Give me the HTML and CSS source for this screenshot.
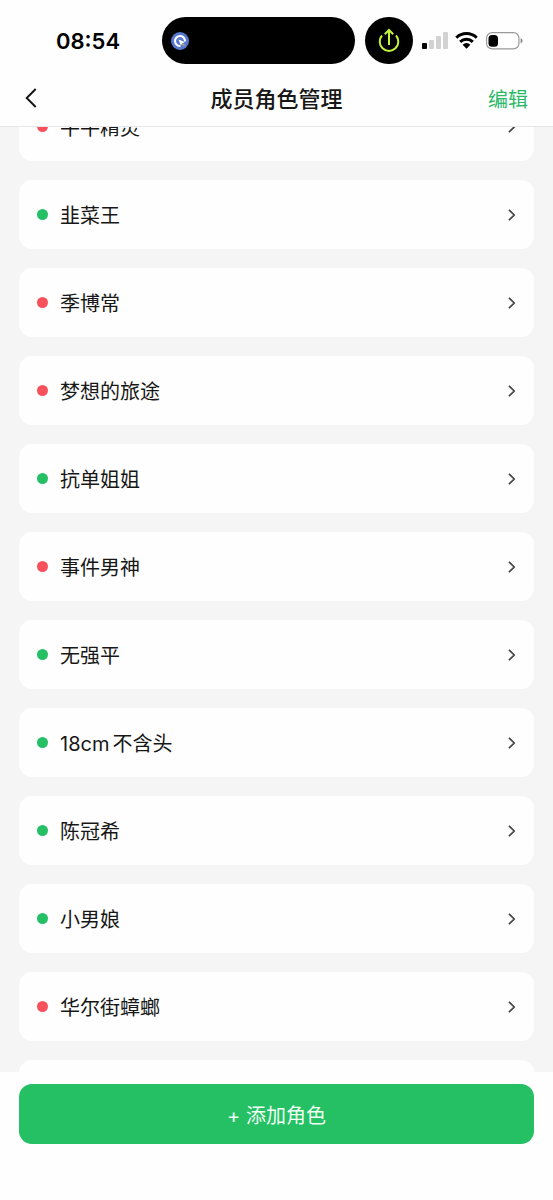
FILE: index.html
```html
<!DOCTYPE html>
<html lang="zh-CN">
<head>
<meta charset="utf-8">
<meta name="viewport" content="width=device-width, initial-scale=1">
<title>成员角色管理</title>
<link rel="stylesheet" href="styles.css">
</head>
<body>
<svg class="sprite" aria-hidden="true">
  <symbol id="chevron" viewBox="0 0 8 14"><path d="M1 1.800L6.200 7L1 12.200" fill="none" stroke="currentColor" stroke-width="1.700"/></symbol>
</svg>
<div class="screen">
  <header class="top">
    <div class="status">
      <time class="clock">08:54</time>
      <div class="island">
        <svg class="island-icon" viewBox="0 0 18 18" aria-hidden="true">
          <circle cx="9" cy="9" r="9" fill="#5878cf"/>
          <path d="M9.500 14A5 5 0 1 1 14 9.500" fill="none" stroke="#fff" stroke-width="2"/>
          <path d="M7.500 7.500L13.800 9.900L11.400 11.300L9.900 13.500Z" fill="#fff"/>
          <path d="M11.400 11.500L13.600 13.800" stroke="#b3a582" stroke-width="1.800"/>
        </svg>
      </div>
      <div class="activity">
        <svg class="activity-icon" viewBox="0 0 24 26" aria-hidden="true">
          <path d="M5 7.500A9.300 9.300 0 1 0 19 7.500M12 17V3M7.800 6.200L12 2L16.200 6.200" fill="none" stroke="#c3f53c" stroke-width="2"/>
        </svg>
      </div>
      <svg class="signal" viewBox="0 0 27 17" aria-hidden="true">
        <rect x="0" y="11" width="5" height="6" rx="1" fill="#000"/>
        <rect x="7" y="8" width="5" height="9" rx="1" fill="#d2d2d2"/>
        <rect x="14" y="4" width="5" height="13" rx="1" fill="#d2d2d2"/>
        <rect x="21" y="0" width="5" height="17" rx="1" fill="#d2d2d2"/>
      </svg>
      <svg class="wifi" viewBox="0 0 23 17" aria-hidden="true">
        <path d="M1.300 5.800A14.500 14.500 0 0 1 21.700 5.800M5.200 9.900A9 9 0 0 1 17.800 9.900" fill="none" stroke="#000" stroke-width="3"/>
        <path d="M7.600 12.700A5.600 5.600 0 0 1 15.400 12.700L11.500 16.800Z" fill="#000"/>
      </svg>
      <svg class="battery" viewBox="0 0 37 18" aria-hidden="true">
        <rect x=".6" y=".6" width="32.300" height="16.300" rx="5.500" fill="#fff" stroke="#999" stroke-width="1.200"/>
        <rect x="2.500" y="3" width="9.500" height="11.800" rx="3.500" fill="#000"/>
        <path d="M34.600 6V11.500Q36.600 10.600 36.600 8.750Q36.600 6.900 34.600 6Z" fill="#888"/>
      </svg>
    </div>
    <nav class="navbar">
      <button class="back" type="button" aria-label="返回">
        <svg class="back-icon" viewBox="0 0 12 20" aria-hidden="true"><path d="M10.700 1L1.700 10L10.700 19" fill="none" stroke="#111" stroke-width="1.900"/></svg>
      </button>
      <h1 class="title">成员角色管理</h1>
      <button class="edit" type="button">编辑</button>
    </nav>
  </header>
  <main class="viewport">
    <ul class="roles">
      <li><a class="role" href="#"><span class="dot off"></span><span class="name">牛牛精灵</span><svg class="chevron"><use href="#chevron"/></svg></a></li>
      <li><a class="role" href="#"><span class="dot"></span><span class="name">韭菜王</span><svg class="chevron"><use href="#chevron"/></svg></a></li>
      <li><a class="role" href="#"><span class="dot off"></span><span class="name">季博常</span><svg class="chevron"><use href="#chevron"/></svg></a></li>
      <li><a class="role" href="#"><span class="dot off"></span><span class="name">梦想的旅途</span><svg class="chevron"><use href="#chevron"/></svg></a></li>
      <li><a class="role" href="#"><span class="dot"></span><span class="name">抗单姐姐</span><svg class="chevron"><use href="#chevron"/></svg></a></li>
      <li><a class="role" href="#"><span class="dot off"></span><span class="name">事件男神</span><svg class="chevron"><use href="#chevron"/></svg></a></li>
      <li><a class="role" href="#"><span class="dot"></span><span class="name">无强平</span><svg class="chevron"><use href="#chevron"/></svg></a></li>
      <li><a class="role" href="#"><span class="dot"></span><span class="name"><span class="latin">18cm</span>不含头</span><svg class="chevron"><use href="#chevron"/></svg></a></li>
      <li><a class="role" href="#"><span class="dot"></span><span class="name">陈冠希</span><svg class="chevron"><use href="#chevron"/></svg></a></li>
      <li><a class="role" href="#"><span class="dot"></span><span class="name">小男娘</span><svg class="chevron"><use href="#chevron"/></svg></a></li>
      <li><a class="role" href="#"><span class="dot off"></span><span class="name">华尔街蟑螂</span><svg class="chevron"><use href="#chevron"/></svg></a></li>
      <li><div class="role"></div></li>
    </ul>
  </main>
  <footer class="bottom">
    <button class="add" type="button">+ 添加角色</button>
  </footer>
</div>
</body>
</html>
```

FILE: styles.css
```css
* {
  box-sizing: border-box;
}

body {
  margin: 0;
  color: #171717;
  background: #fefefe;
  font-family: Inter, "Noto Sans CJK SC", sans-serif;
  font-size: 20px;
  line-height: 28px;
}

button {
  padding: 0;
  border: 0;
  background: none;
  font: inherit;
  cursor: pointer;
}

svg {
  display: block;
  flex: none;
}

.sprite {
  position: absolute;
  width: 0;
  height: 0;
}

.screen {
  display: flex;
  flex-direction: column;
  height: 100vh;
}

.top {
  flex: none;
  background: #fefefe;
  border-bottom: 1px solid #e6e6e6;
}

.status {
  display: flex;
  align-items: center;
  padding: 17px 30px 0 56px;
}

.clock {
  flex: 1;
  color: #000;
  font-size: 22px;
  font-weight: 600;
}

.island {
  display: flex;
  align-items: center;
  width: 193px;
  height: 47px;
  margin-right: 10px;
  padding-left: 9px;
  border-radius: 24px;
  background: #000;
}

.island-icon {
  width: 18px;
  height: 18px;
}

.activity {
  display: grid;
  place-items: center;
  width: 48px;
  height: 47px;
  margin-right: 9px;
  border-radius: 24px;
  background: #000;
}

.activity-icon {
  width: 24px;
  height: 26px;
}

.signal {
  width: 27px;
  height: 17px;
  margin-right: 6px;
}

.wifi {
  width: 23px;
  height: 17px;
  margin-right: 8px;
}

.battery {
  width: 37px;
  height: 18px;
}

.navbar {
  display: grid;
  grid-template-columns: 1fr auto 1fr;
  align-items: center;
  height: 62px;
  padding: 6px 25px 0;
}

.back {
  justify-self: start;
}

.back-icon {
  width: 12px;
  height: 20px;
}

.title {
  margin: 0;
  padding-top: 2px;
  font-size: 22px;
  font-weight: 500;
}

.edit {
  justify-self: end;
  padding-top: 4px;
  color: #2bb968;
}

.viewport {
  flex: 1;
  min-height: 0;
  overflow: hidden;
  background: #f5f5f5;
}

/* The list rests partly scrolled under the header. */
.roles {
  display: flex;
  flex-direction: column;
  gap: 19px;
  margin: -35px 0 0;
  padding: 0 19px;
  list-style: none;
}

.role {
  display: flex;
  align-items: center;
  height: 69px;
  padding: 0 18px;
  border-radius: 13px;
  background: #fefefe;
  color: inherit;
  text-decoration: none;
}

.dot {
  width: 11px;
  height: 11px;
  margin-right: 12px;
  border-radius: 50%;
  background: #25bf66;
}

.dot.off {
  background: #f9515c;
}

.name {
  flex: 1;
  padding-top: 2px;
}

.latin {
  margin-right: 3px;
}

.chevron {
  width: 8px;
  height: 14px;
  color: #444;
}

.bottom {
  flex: none;
  padding: 12px 19px 56px;
  background: #fefefe;
}

.add {
  display: block;
  width: 100%;
  height: 60px;
  padding-top: 3px;
  border-radius: 13px;
  background: #25c063;
  color: #effff4;
}
```
